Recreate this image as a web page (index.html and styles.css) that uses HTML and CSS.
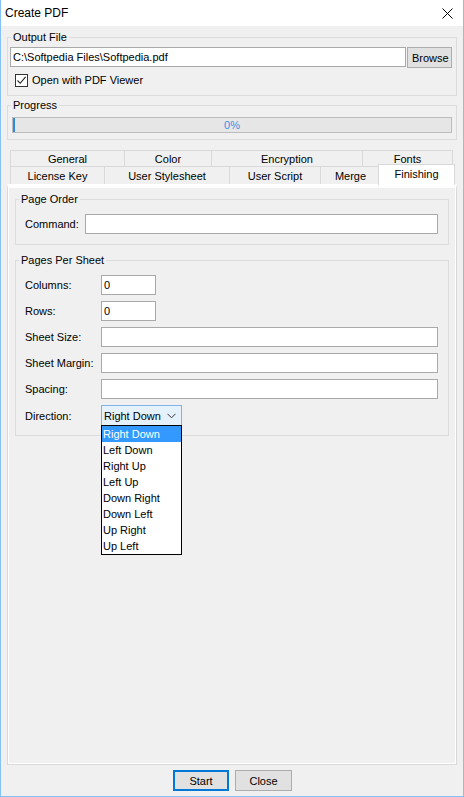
FILE: index.html
```html
<!DOCTYPE html>
<html>
  <head>
    <meta charset="UTF-8">
    <title>Create PDF</title>
    <link rel="stylesheet" href="styles.css">
  </head>
  <body>
    <div id="window" class="flex-column">
      <header class="titlebar flex items-center">
        <span class="flex-grow-1">Create PDF</span>
        <svg class="close-icon" width="11" height="11" viewBox="0 0 11 11">
          <path d="M0.5 0.5L10.5 10.5M10.5 0.5L0.5 10.5" stroke="#000" stroke-width="1"/>
        </svg>
      </header>

      <div id="dialogBody" class="flex-column flex-grow-1">

        <fieldset class="group" id="outputGroup">
          <legend>Output File</legend>
          <div class="group-body">
            <div class="flex">
              <input type="text" class="textbox flex-grow-1" value="C:\Softpedia Files\Softpedia.pdf">
              <button class="btn btn-browse">Browse</button>
            </div>
            <label class="check flex items-center">
              <span class="check-box">
                <svg width="11" height="11" viewBox="0 0 11 11">
                  <path d="M1.5 5.5L4.2 8.3L9.6 1.8" fill="none" stroke="#222" stroke-width="1.1"/>
                </svg>
              </span>
              Open with PDF Viewer
            </label>
          </div>
        </fieldset>

        <fieldset class="group" id="progressGroup">
          <legend>Progress</legend>
          <div class="group-body">
            <div class="progress">
              <span class="progress-fill"></span>
              <span class="progress-text">0%</span>
            </div>
          </div>
        </fieldset>

        <div class="tabs">
          <div class="tab-row tab-row-back flex">
            <div class="tab tab-general">General</div>
            <div class="tab tab-color">Color</div>
            <div class="tab tab-encryption">Encryption</div>
            <div class="tab tab-fonts">Fonts</div>
          </div>
          <div class="tab-row tab-row-front flex">
            <div class="tab tab-license">License Key</div>
            <div class="tab tab-stylesheet">User Stylesheet</div>
            <div class="tab tab-script">User Script</div>
            <div class="tab tab-merge">Merge</div>
            <div class="tab tab-finishing selected">Finishing</div>
          </div>
        </div>

        <section class="tab-page flex-grow-1">
          <fieldset class="group" id="pageOrder">
            <legend>Page Order</legend>
            <div class="group-body">
              <div class="field flex items-center">
                <span class="field-label label-short">Command:</span>
                <input type="text" class="textbox flex-grow-1">
              </div>
            </div>
          </fieldset>

          <fieldset class="group" id="pagesPerSheet">
            <legend>Pages Per Sheet</legend>
            <div class="group-body">
              <div class="field flex items-center">
                <span class="field-label">Columns:</span>
                <input type="text" class="textbox textbox-small" value="0">
              </div>
              <div class="field flex items-center">
                <span class="field-label">Rows:</span>
                <input type="text" class="textbox textbox-small" value="0">
              </div>
              <div class="field flex items-center">
                <span class="field-label">Sheet Size:</span>
                <input type="text" class="textbox flex-grow-1">
              </div>
              <div class="field flex items-center">
                <span class="field-label">Sheet Margin:</span>
                <input type="text" class="textbox flex-grow-1">
              </div>
              <div class="field flex items-center">
                <span class="field-label">Spacing:</span>
                <input type="text" class="textbox flex-grow-1">
              </div>
              <div class="field flex items-center">
                <span class="field-label">Direction:</span>
                <div class="combo-wrap">
                  <div class="combo flex items-center">
                    <span class="flex-grow-1">Right Down</span>
                    <svg width="9" height="6" viewBox="0 0 9 6">
                      <path d="M0.5 0.8L4.5 4.8L8.5 0.8" fill="none" stroke="#333" stroke-width="1"/>
                    </svg>
                  </div>
                  <ul class="combo-list">
                    <li class="active">Right Down</li>
                    <li>Left Down</li>
                    <li>Right Up</li>
                    <li>Left Up</li>
                    <li>Down Right</li>
                    <li>Down Left</li>
                    <li>Up Right</li>
                    <li>Up Left</li>
                  </ul>
                </div>
              </div>
            </div>
          </fieldset>
        </section>

        <footer class="buttons flex">
          <button class="btn btn-default">Start</button>
          <button class="btn">Close</button>
        </footer>
      </div>
    </div>
  </body>
</html>
```

FILE: styles.css
```css
/* Variables */
:root {
	--window-border: #86c1f3;
	--face: #f0f0f0;
	--group-border: #dcdcdc;
	--tab-border: #d9d9d9;
	--input-border: #a9a9a9;
	--button-face: #e1e1e1;
	--button-border: #adadad;
	--accent: #0078d7;
	--highlight: #3399ff;
}

/* Resets */
* {
	margin: 0;
	padding: 0;
	box-sizing: border-box;
}

body {
	width: 464px;
	height: 797px;
	overflow: hidden;
	font-family: "Liberation Sans", Arial, sans-serif;
	font-size: 11px;
	color: #000;
}

input,
button {
	font: inherit;
	color: inherit;
}

/* Helpers */
.flex {
	display: flex;
}

.flex-column {
	display: flex;
	flex-direction: column;
}

.flex-grow-1 {
	flex-grow: 1;
}

.items-center {
	align-items: center;
}

/* Window */
#window {
	height: 100%;
	background: var(--face);
	border: 1px solid var(--window-border);
	border-top: none;
}

.titlebar {
	height: 26px;
	flex-shrink: 0;
	background: #fff;
	padding: 0 10px 0 4px;
	font-size: 12px;
}

#dialogBody {
	padding: 3px 6px 0;
}

/* Group boxes */
.group {
	border: 1px solid var(--group-border);
	min-width: 0;
	flex-shrink: 0;
}

.group legend {
	margin-left: 3px;
	padding: 0 2px;
	line-height: 16px;
}

#outputGroup .group-body {
	padding: 2px 4px 7px 2px;
}

#progressGroup {
	margin-top: 1px;
}

#progressGroup .group-body {
	padding: 4px 4px 6px 4px;
}

/* Inputs */
.textbox {
	height: 20px;
	border: 1px solid var(--input-border);
	background: #fff;
	padding: 0 2px;
	outline: none;
}

.textbox-small {
	width: 55px;
}

.btn {
	height: 21px;
	background: var(--button-face);
	border: 1px solid var(--button-border);
	padding: 0 4px;
}

.btn-browse {
	width: 45px;
	margin-left: 1px;
}

.check {
	margin-top: 4px;
	height: 16px;
	padding-left: 5px;
}

.check-box {
	width: 13px;
	height: 13px;
	border: 1px solid #333;
	background: #fff;
	margin-right: 4px;
	display: flex;
	align-items: center;
	justify-content: center;
}

/* Progress */
.progress {
	position: relative;
	height: 16px;
	background: #e6e6e6;
	border: 1px solid #bcbcbc;
	text-align: center;
	line-height: 14px;
	color: #3a8fe6;
}

.progress-fill {
	position: absolute;
	left: 0;
	top: 0;
	bottom: 0;
	width: 2px;
	background: #2e8be0;
}

/* Tabs */
.tabs {
	margin: 10px 0 0 3px;
	flex-shrink: 0;
}

.tab {
	border: 1px solid var(--tab-border);
	border-bottom: none;
	border-right: none;
	text-align: center;
	background: var(--face);
	padding-top: 1px;
	white-space: nowrap;
}

.tab-row-back .tab {
	height: 16px;
	line-height: 15px;
}

.tab-row-front .tab {
	height: 18px;
	line-height: 16px;
}

.tab-general { width: 114px; }
.tab-color { width: 87px; }
.tab-encryption { width: 151px; }
.tab-fonts { width: 91px; border-right: 1px solid var(--tab-border); }

.tab-license { width: 94px; }
.tab-stylesheet { width: 125px; }
.tab-script { width: 91px; }
.tab-merge { width: 60px; }

.tab-row-front .tab.selected {
	position: relative;
	z-index: 2;
	width: 77px;
	height: 21px;
	margin: -2px 0 -1px -2px;
	background: #fff;
	border-right: 1px solid var(--tab-border);
}

.tab-page {
	position: relative;
	border: 1px solid var(--tab-border);
	border-top: 4px solid #fff;
	box-shadow: inset 1px 0 #fff, inset -1px 0 #fff, inset 0 -1px #fff;
	padding: 3px 7px 0;
}

/* Finishing page */
#pageOrder .group-body {
	padding: 7px 10px 10px 9px;
}

#pagesPerSheet {
	margin-top: 7px;
}

#pagesPerSheet .group-body {
	padding: 7px 10px 9px 9px;
}

.field + .field {
	margin-top: 6px;
}

.field-label {
	width: 76px;
	flex-shrink: 0;
}

.field-label.label-short {
	width: 60px;
}

.combo-wrap {
	position: relative;
}

.combo {
	width: 81px;
	height: 21px;
	border: 1px solid #7eb4ea;
	background: #e5f1fb;
	padding: 0 5px 0 2px;
}

.combo-list {
	position: absolute;
	top: 20px;
	left: 0;
	z-index: 3;
	width: 81px;
	list-style: none;
	background: #fff;
	border: 1px solid #000;
}

.combo-list li {
	height: 16px;
	line-height: 16px;
	padding-left: 1px;
	white-space: nowrap;
}

.combo-list li.active {
	background: var(--highlight);
	color: #fff;
}

/* Footer */
.buttons {
	flex-shrink: 0;
	justify-content: center;
	gap: 6px;
	padding: 5px 0 5px 1px;
}

.buttons .btn {
	width: 57px;
}

.buttons .btn-default {
	width: 56px;
	border-color: var(--accent);
	box-shadow: inset 0 0 0 1px var(--accent);
}
```
